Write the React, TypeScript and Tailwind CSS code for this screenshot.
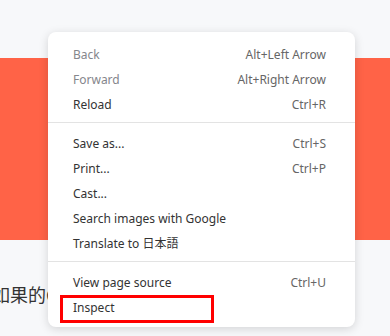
const items: ({ label: string; key?: string; dim?: boolean } | "sep")[] = [
  { label: "Back", key: "Alt+Left Arrow", dim: true },
  { label: "Forward", key: "Alt+Right Arrow", dim: true },
  { label: "Reload", key: "Ctrl+R" },
  "sep",
  { label: "Save as...", key: "Ctrl+S" },
  { label: "Print...", key: "Ctrl+P" },
  { label: "Cast..." },
  { label: "Search images with Google" },
  { label: "Translate to 日本語" },
  "sep",
  { label: "View page source", key: "Ctrl+U" },
  { label: "Inspect" },
];

export default function App() {
  return (
    <div
      className="relative h-[336px] w-[390px] overflow-hidden bg-[#f7f8fa]"
      style={{ fontFamily: '"Noto Sans", "Noto Sans CJK JP", sans-serif' }}
    >
      {/* page behind the menu */}
      <div className="h-[58px]" />
      <div className="h-[182px] bg-[#ff6347]" />
      <div className="pt-[45px] -ml-[8px] text-[18px] leading-[20px] text-[#333]">
        如果的C
      </div>

      {/* context menu */}
      <div className="absolute left-[48px] top-[32px] w-[307px] rounded-[8px] bg-white pt-[10px] pb-[7px] shadow-[0_2px_10px_rgba(0,0,0,0.15)]">
        {items.map((it, i) =>
          it === "sep" ? (
            <div key={i} className="mt-[5px] mb-[8px] h-px bg-[#e3e3e3]" />
          ) : (
            <div
              key={i}
              className="relative flex h-[25px] items-center justify-between pl-[25px] pr-[29px] text-[12px]"
            >
              <span className={it.dim ? "text-[#85868c]" : "text-[#333]"}>{it.label}</span>
              {it.key && <span className="text-[#666]">{it.key}</span>}
              {it.label === "Inspect" && (
                <div className="absolute left-[12px] top-0 h-[28px] w-[154px] border-[3px] border-[#ff0000]" />
              )}
            </div>
          )
        )}
      </div>
    </div>
  );
}
